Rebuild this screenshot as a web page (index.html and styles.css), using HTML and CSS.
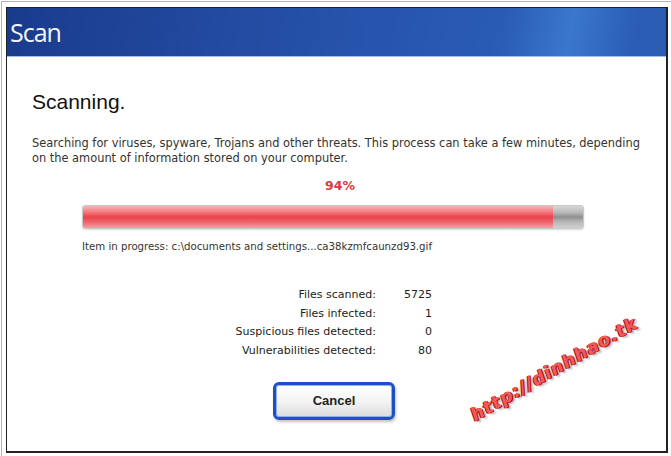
FILE: index.html
```html
<!DOCTYPE html>
<html>
  <head>
    <title>Scan</title>
    <link rel="stylesheet" href="styles.css">
  </head>
  <body>
    <div class="frame">
      <div class="dialog">
        <div class="titlebar">
          <span class="title">Scan</span>
        </div>
        <div class="content">
          <h1>Scanning.</h1>
          <p class="desc">Searching for viruses, spyware, Trojans and other threats. This process can take a few minutes, depending on the amount of information stored on your computer.</p>
          <div class="percent">94%</div>
          <div class="bar">
            <div class="fill" style="width: 94%"></div>
          </div>
          <div class="item">Item in progress: c:\documents and settings...ca38kzmfcaunzd93.gif</div>
          <div class="stats">
            <span class="label">Files scanned:</span><span class="value">5725</span>
            <span class="label">Files infected:</span><span class="value">1</span>
            <span class="label">Suspicious files detected:</span><span class="value">0</span>
            <span class="label">Vulnerabilities detected:</span><span class="value">80</span>
          </div>
          <div class="buttons">
            <button class="cancel">Cancel</button>
          </div>
        </div>
        <div class="watermark">http://dinhhao.tk</div>
      </div>
    </div>
  </body>
</html>
```
FILE: styles.css
```css
body {
  margin: 0;
  background: #fff;
  font-family: "DejaVu Sans", Verdana, sans-serif;
}
.frame {
  margin: 1px;
  width: 662px;
  height: 447px;
  border: 1px solid #b4b4b4;
  border-right-width: 2px;
  padding: 5px 4px 2px 4px;
}
.dialog {
  position: relative;
  height: 443px;
  border: 1px solid #222;
  border-right-width: 2px;
  border-bottom-width: 2px;
  overflow: hidden;
}
.titlebar {
  height: 48px;
  background: linear-gradient(100deg, #1a3b8c 0%, #2550a8 45%, #2a5cb4 75%, #3a78cc 85%, #2a5cb4 95%);
  border-bottom: 1px solid #9cc0ea;
  display: flex;
  align-items: center;
  padding-left: 3px;
}
.title {
  color: #f2f6ff;
  font-family: "Open Sans", sans-serif;
  font-size: 25px;
  letter-spacing: -1px;
}
.content {
  padding: 0 10px 0 25px;
}
h1 {
  margin: 32px 0 0 0;
  font-family: "Liberation Sans", Arial, sans-serif;
  font-size: 21px;
  font-weight: normal;
  line-height: 26px;
  color: #111;
}
.desc {
  margin: 21px 0 0 0;
  font-size: 11.4px;
  line-height: 15px;
  color: #333;
}
.percent {
  margin-top: 12px;
  text-align: center;
  font-weight: bold;
  font-size: 12.5px;
  color: #dc3a40;
  line-height: 16px;
  padding-right: 8px;
}
.bar {
  margin: 11px 0 0 50px;
  width: 500px;
  height: 22px;
  border: 1px solid #c8c8c8;
  border-radius: 3px;
  background: linear-gradient(#d6d6d6 0%, #b8b8b8 30%, #8e8e8e 50%, #b4b4b4 70%, #d0d0d0 100%);
  box-shadow: 0 1px 2px rgba(0,0,0,0.15);
}
.fill {
  height: 100%;
  border-radius: 2px 0 0 2px;
  background: linear-gradient(#f9b3b6 0%, #f47f86 25%, #e8434c 50%, #ef6870 75%, #f7a0a5 100%);
}
.item {
  margin: 11px 0 0 50px;
  font-size: 10.2px;
  color: #333;
  line-height: 14px;
}
.stats {
  display: grid;
  grid-template-columns: 150px 56px;
  margin: 32px 0 0 194px;
  font-size: 11px;
  line-height: 18.7px;
  color: #222;
}
.label, .value {
  text-align: right;
}
.buttons {
  display: flex;
  justify-content: center;
  margin-top: 21px;
  padding-right: 20px;
}
.cancel {
  width: 122px;
  height: 38px;
  border: 3px solid #1f4fc4;
  border-radius: 6px;
  background: linear-gradient(#ffffff 0%, #f4f4f4 50%, #dcdcdc 100%);
  box-shadow: 1px 2px 3px rgba(0,0,0,0.25), inset 0 0 0 1px #8fb0ea;
  font-family: "Liberation Sans", Arial, sans-serif;
  font-weight: bold;
  font-size: 13px;
  color: #222;
}
.watermark {
  position: absolute;
  left: 452px;
  top: 350px;
  transform: rotate(-30deg);
  font-weight: bold;
  font-style: italic;
  font-size: 18px;
  color: #f25a5a;
  text-shadow: 1px 1px 0 #b01010, -1px 0 0 #b01010, 2px 3px 2px rgba(120,120,120,0.5);
  letter-spacing: 1px;
}
```
